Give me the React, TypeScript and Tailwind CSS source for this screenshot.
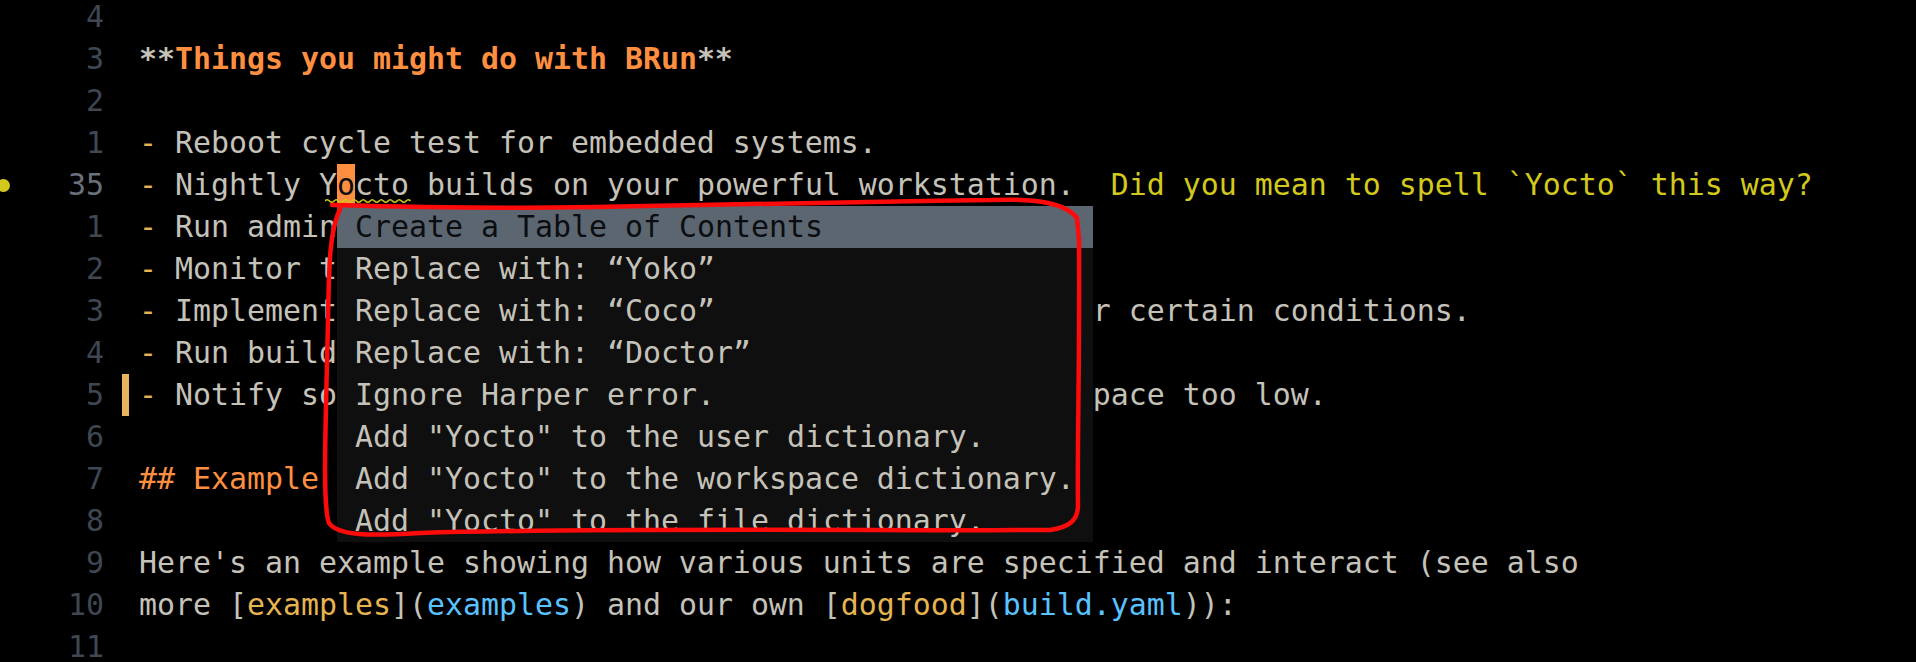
import React from "react";

const FG = "text-[#c5c2b9]";

function wavePath(width: number, period: number, amp: number, mid: number) {
  const half = period / 2;
  let d = `M0 ${mid}`;
  let x = 0;
  let up = true;
  while (x < width) {
    const cx = x + half / 2;
    const cy = up ? mid - amp * 2 : mid + amp * 2;
    d += ` Q${cx} ${cy} ${x + half} ${mid}`;
    x += half;
    up = !up;
  }
  return d;
}

type Line = {
  num: string;
  current?: boolean;
  dot?: boolean;
  bar?: boolean;
  content: React.ReactNode;
};

const Dash = () => <span className="text-[#e6b450]">-</span>;

const lines: Line[] = [
  { num: "4", content: "" },
  {
    num: "3",
    content: (
      <span className="font-bold">
        <span>**</span>
        <span className="text-[#ff8f40]">Things you might do with BRun</span>
        <span>**</span>
      </span>
    ),
  },
  { num: "2", content: "" },
  {
    num: "1",
    content: (
      <>
        <Dash /> Reboot cycle test for embedded systems.
      </>
    ),
  },
  {
    num: "35",
    current: true,
    dot: true,
    content: (
      <>
        <Dash /> Nightly{" "}
        <span className="relative inline-block">
          Y
          <span className="inline-block h-[42px] bg-[#ff8f40] align-top text-[#0b0e14]">o</span>
          cto
          <svg
            className="absolute left-[6px] top-[33px]"
            width="86"
            height="8"
            viewBox="0 0 86 8"
          >
            <path d={wavePath(84, 9, 1.3, 4)} fill="none" stroke="#cfc61a" strokeWidth="1.6" />
          </svg>
        </span>{" "}
        builds on your powerful workstation.
        <span className="text-[#d2c91c]">{"  Did you mean to spell `Yocto` this way?"}</span>
      </>
    ),
  },
  {
    num: "1",
    content: (
      <>
        <Dash /> Run admin
      </>
    ),
  },
  {
    num: "2",
    content: (
      <>
        <Dash /> Monitor t
      </>
    ),
  },
  {
    num: "3",
    content: (
      <>
        <Dash /> Implement{" ".repeat(42)}r certain conditions.
      </>
    ),
  },
  {
    num: "4",
    content: (
      <>
        <Dash /> Run build
      </>
    ),
  },
  {
    num: "5",
    bar: true,
    content: (
      <>
        <Dash /> Notify so{" ".repeat(42)}pace too low.
      </>
    ),
  },
  { num: "6", content: "" },
  {
    num: "7",
    content: <span className="text-[#ff8f40]">## Example</span>,
  },
  { num: "8", content: "" },
  {
    num: "9",
    content:
      "Here's an example showing how various units are specified and interact (see also",
  },
  {
    num: "10",
    content: (
      <>
        more [<span className="text-[#e6b450]">examples</span>](
        <span className="text-[#59c2ff]">examples</span>) and our own [
        <span className="text-[#e6b450]">dogfood</span>](
        <span className="text-[#59c2ff]">build.yaml</span>)):
      </>
    ),
  },
  { num: "11", content: "" },
];

const menuItems = [
  "Create a Table of Contents",
  "Replace with: \u201cYoko\u201d",
  "Replace with: \u201cCoco\u201d",
  "Replace with: \u201cDoctor\u201d",
  "Ignore Harper error.",
  'Add "Yocto" to the user dictionary.',
  'Add "Yocto" to the workspace dictionary.',
  'Add "Yocto" to the file dictionary.',
];

export default function App() {
  return (
    <div
      className={`relative h-[662px] w-[1916px] overflow-hidden bg-black font-['DejaVu_Sans_Mono',monospace] text-[29.9px] leading-[42px] ${FG}`}
    >
      <div className="-mt-1 flex flex-col">
        {lines.map((l, i) => (
          <div key={i} className="flex h-[42px]">
            <div className="flex w-[18px] items-center">
              {l.dot && <div className="-ml-[3px] h-[13px] w-[13px] rounded-full bg-[#d2c91c]" />}
            </div>
            <div
              className={`w-[86px] text-right ${l.current ? "text-[#6a717c]" : "text-[#3f4753]"}`}
            >
              {l.num}
            </div>
            <div className="w-[18px]" />
            <div className={`w-[7px] ${l.bar ? "bg-[#e6b45c]" : ""}`} />
            <div className="w-[10px]" />
            <div className="whitespace-pre">{l.content}</div>
          </div>
        ))}
      </div>

      {/* code action popup */}
      <div className="absolute left-[337px] top-[206px] flex w-[756px] flex-col bg-[#0f0f0f]">
        {menuItems.map((m, i) => (
          <div
            key={i}
            className={`h-[42px] whitespace-pre pl-[18px] ${
              i === 0 ? "bg-[#5c6670] text-[#0b0d10]" : "text-[#c5c2b9]"
            }`}
          >
            {m}
          </div>
        ))}
      </div>

      {/* red hand-drawn annotation */}
      <svg
        className="pointer-events-none absolute left-0 top-0"
        width="1916"
        height="662"
        viewBox="0 0 1916 662"
      >
        <path
          d="M 332 205 C 480 209, 560 208, 700 205 C 820 203, 900 201, 990 200 C 1040 198, 1066 204, 1077 218 L 1079 240 C 1080 350, 1077 450, 1078 505 C 1078 520, 1070 527, 1050 530 C 900 531, 620 527, 420 533 C 370 536, 338 536, 329 523 C 322 505, 326 420, 328 320 C 329 260, 330 230, 340 209"
          fill="none"
          stroke="#ff0a0a"
          strokeWidth="4.5"
          strokeLinecap="round"
          strokeLinejoin="round"
        />
      </svg>
    </div>
  );
}
